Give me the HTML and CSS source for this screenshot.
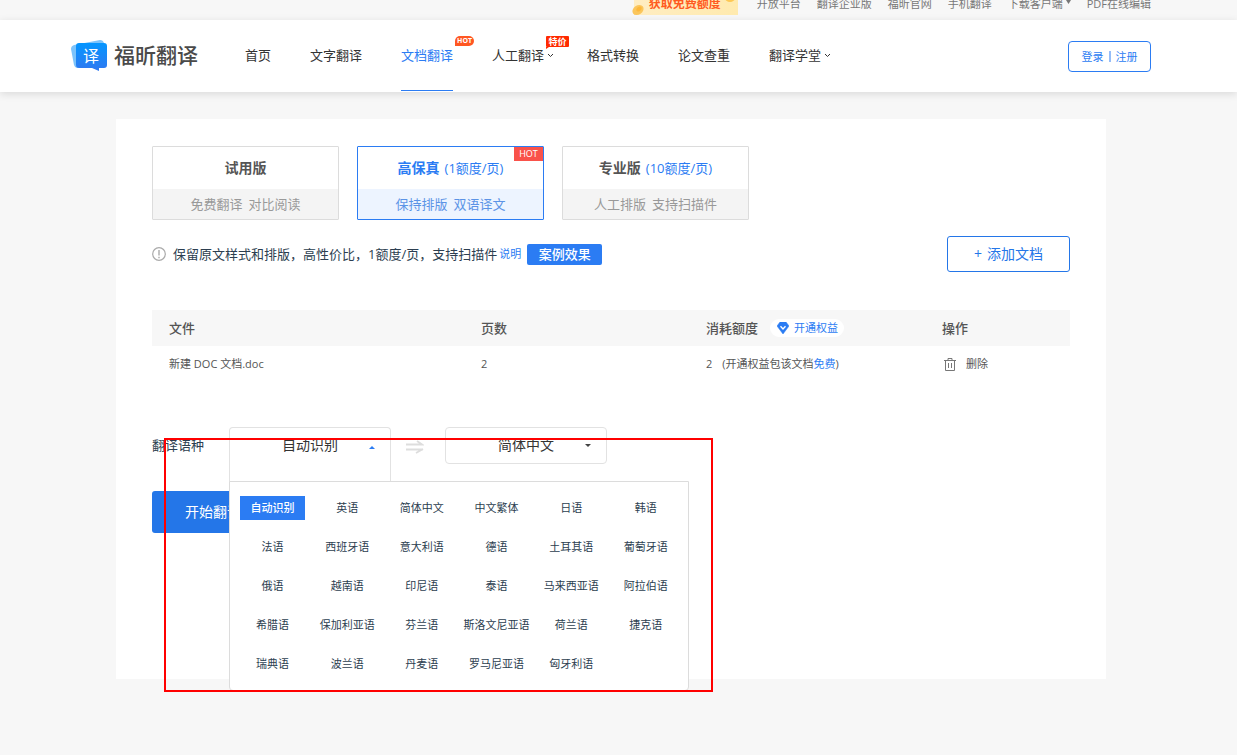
FILE: index.html
```html
<!DOCTYPE html>
<html lang="zh-CN">
<head>
<meta charset="utf-8">
<meta name="viewport" content="width=device-width, initial-scale=1">
<title>福昕翻译 - 文档翻译</title>
<link rel="stylesheet" href="styles.css">
</head>
<body>
<div class="topbar">
  <div class="wrap topbar-inner">
    <a class="promo" href="#">
      <svg class="promo-bg" viewBox="0 0 106 32" aria-hidden="true">
        <defs><linearGradient id="pg" x1="0" x2="1"><stop offset="0" stop-color="#ffedc2"/><stop offset="1" stop-color="#ffeaae"/></linearGradient></defs>
        <path d="M2 0H106V31H2Z" fill="url(#pg)"/>
        <ellipse cx="6" cy="26" rx="6" ry="4.500" transform="rotate(-35 6 26)" fill="#fbc65c"/>
        <ellipse cx="7" cy="25" rx="3" ry="2" transform="rotate(-35 7 25)" fill="#fdb83a"/>
        <ellipse cx="98" cy="14" rx="5" ry="4" fill="#fdc854"/>
      </svg>
      <span class="promo-text">获取免费额度</span>
    </a>
    <nav class="toplinks">
      <a href="#">开放平台</a>
      <a href="#">翻译企业版</a>
      <a href="#">福昕官网</a>
      <a href="#">手机翻译</a>
      <a href="#" class="with-caret">下载客户端<svg width="5" height="4" viewBox="0 0 5 4" aria-hidden="true"><path d="M0 0H5L2.500 4Z" fill="#777"/></svg></a>
      <a href="#">PDF在线编辑</a>
    </nav>
  </div>
</div>

<header class="header">
  <div class="wrap header-inner">
    <a class="logo" href="#">
      <span class="logo-mark">
        <svg width="37" height="32" viewBox="0 0 37 32" aria-hidden="true">
          <defs><linearGradient id="lg" x1="0" y1="0" x2="0" y2="1"><stop offset="0" stop-color="#0496ff"/><stop offset="1" stop-color="#3178f0"/></linearGradient></defs>
          <path d="M3 5L29 0Q32 0 33 3L34 20L6 28Q4 28 3 25L0 9Q0 6 3 5Z" fill="#7cc3fb"/>
          <path d="M8 3H33Q36 3 36 6V25Q36 28 33 28H28V31L21 28H8Q5 28 5 25V6Q5 3 8 3Z" fill="url(#lg)"/>
        </svg>
        <span class="logo-char">译</span>
      </span>
      <span class="logo-text">福昕翻译</span>
    </a>
    <nav class="nav">
      <a href="#">首页</a>
      <a href="#">文字翻译</a>
      <a href="#" class="active">文档翻译<span class="tag tag-hot">HOT</span></a>
      <a href="#" class="menu">人工翻译<svg width="7" height="5" viewBox="0 0 7 5" aria-hidden="true"><path d="M1 1L3.500 3.500L6 1" fill="none" stroke="#333"/></svg><span class="tag tag-sale">特价</span></a>
      <a href="#">格式转换</a>
      <a href="#">论文查重</a>
      <a href="#" class="menu">翻译学堂<svg width="7" height="5" viewBox="0 0 7 5" aria-hidden="true"><path d="M1 1L3.500 3.500L6 1" fill="none" stroke="#333"/></svg></a>
    </nav>
    <button class="login" type="button">登录<i></i>注册</button>
  </div>
</header>

<main class="card">
  <div class="plans">
    <button type="button" class="plan">
      <span class="plan-title"><b>试用版</b></span>
      <span class="plan-desc"><span>免费翻译</span><span>对比阅读</span></span>
    </button>
    <button type="button" class="plan selected">
      <span class="plan-title"><b>高保真</b><span class="price">(1额度/页)</span></span>
      <span class="plan-desc"><span>保持排版</span><span>双语译文</span></span>
      <span class="plan-hot">HOT</span>
    </button>
    <button type="button" class="plan">
      <span class="plan-title"><b>专业版</b><span class="price">(10额度/页)</span></span>
      <span class="plan-desc"><span>人工排版</span><span>支持扫描件</span></span>
    </button>
  </div>

  <div class="info">
    <svg width="14" height="16" viewBox="0 0 14 16" aria-hidden="true"><circle cx="7" cy="8" r="6.300" fill="none" stroke="#aaa" stroke-width="1.200"/><path d="M7 4V9.500M7 10.800V12.200" stroke="#aaa" stroke-width="1.400"/></svg>
    <span class="info-text">保留原文样式和排版，高性价比，1额度/页，支持扫描件</span>
    <a class="explain" href="#">说明</a>
    <button class="example" type="button">案例效果</button>
    <button class="add" type="button"><span>+</span>添加文档</button>
  </div>

  <table class="files">
    <colgroup><col class="c-file"><col class="c-pages"><col class="c-cost"><col class="c-act"></colgroup>
    <thead>
      <tr>
        <th>文件</th>
        <th>页数</th>
        <th><span class="cell">消耗额度<a class="vip" href="#"><svg width="12" height="12" viewBox="0 0 12 12" aria-hidden="true"><path d="M3 0H9L12 4L6 12L0 4Z" fill="#2b7cf3" stroke="#2b7cf3" stroke-linejoin="round" stroke-width=".5"/><path d="M3.500 4.200L6 7L8.500 4.200" fill="none" stroke="#fff" stroke-width="1.300"/></svg>开通权益</a></span></th>
        <th>操作</th>
      </tr>
    </thead>
    <tbody>
      <tr>
        <td>新建 DOC 文档.doc</td>
        <td>2</td>
        <td><span class="cell cost">2<span>(开通权益包该文档<a href="#">免费</a>)</span></span></td>
        <td><button class="delete" type="button"><svg width="12" height="13" viewBox="0 0 12 13" aria-hidden="true"><path d="M0 2.500H12M4 2V.5H8V2M1.500 2.500V12.500H10.500V2.500M4.500 5V10M7.500 5V10" fill="none" stroke="#777"/></svg>删除</button></td>
      </tr>
    </tbody>
  </table>

  <div class="languages">
    <label class="lang-label" for="from">翻译语种</label>
    <div class="picker open">
      <select id="from"><option>自动识别</option></select>
      <svg class="arrow" width="6" height="3" viewBox="0 0 6 3" aria-hidden="true"><path d="M0 3H6L3 0Z" fill="#2b7cf3"/></svg>
      <div class="panel">
        <button type="button" class="chosen">自动识别</button>
        <button type="button">英语</button>
        <button type="button">简体中文</button>
        <button type="button">中文繁体</button>
        <button type="button">日语</button>
        <button type="button">韩语</button>
        <button type="button">法语</button>
        <button type="button">西班牙语</button>
        <button type="button">意大利语</button>
        <button type="button">德语</button>
        <button type="button">土耳其语</button>
        <button type="button">葡萄牙语</button>
        <button type="button">俄语</button>
        <button type="button">越南语</button>
        <button type="button">印尼语</button>
        <button type="button">泰语</button>
        <button type="button">马来西亚语</button>
        <button type="button">阿拉伯语</button>
        <button type="button">希腊语</button>
        <button type="button">保加利亚语</button>
        <button type="button">芬兰语</button>
        <button type="button">斯洛文尼亚语</button>
        <button type="button">荷兰语</button>
        <button type="button">捷克语</button>
        <button type="button">瑞典语</button>
        <button type="button">波兰语</button>
        <button type="button">丹麦语</button>
        <button type="button">罗马尼亚语</button>
        <button type="button">匈牙利语</button>
      </div>
    </div>
    <svg class="swap" width="18" height="14" viewBox="0 0 18 14" aria-hidden="true"><path d="M0 4.500H16L11 1M0 9.500H17M17 9L10 13" fill="none" stroke="#ddd" stroke-width="1.800"/></svg>
    <div class="picker">
      <select id="to" aria-label="目标语种"><option>简体中文</option></select>
      <svg class="arrow" width="6" height="3" viewBox="0 0 6 3" aria-hidden="true"><path d="M0 0H6L3 3Z" fill="#444"/></svg>
    </div>
    <div class="marker"></div>
  </div>

  <button class="start" type="button">开始翻译</button>
</main>
</body>
</html>
```

FILE: styles.css
```css
* {
  box-sizing: border-box;
}

body {
  margin: 0;
  padding-right: 15px;
  min-height: 100vh;
  background: #f7f7f7;
  color: #333;
  font-family: "Open Sans", "Noto Sans CJK SC", sans-serif;
  font-size: 13px;
  line-height: 20px;
}

a {
  color: inherit;
  text-decoration: none;
}

button,
select {
  margin: 0;
  padding: 0;
  border: 0;
  background: none;
  color: inherit;
  font: inherit;
  white-space: nowrap;
  cursor: pointer;
}

.wrap {
  max-width: 1080px;
  margin: 0 auto;
}

/* top bar */
.topbar {
  height: 20px;
  overflow: hidden;
}

.topbar-inner {
  display: flex;
  justify-content: flex-end;
  align-items: flex-end;
  gap: 19px;
  height: 20px;
}

.promo {
  position: relative;
  display: flex;
  justify-content: center;
  align-items: flex-end;
  width: 106px;
  height: 32px;
  padding-bottom: 4px;
  margin-bottom: 4px;
}

.promo-bg {
  position: absolute;
  inset: 0;
}

.promo-text {
  position: relative;
  color: #ff5a1f;
  font-size: 12px;
  font-weight: 700;
  line-height: 16px;
}

.toplinks {
  display: flex;
  gap: 16px;
  padding-bottom: 8px;
  color: #777;
  font-size: 11px;
  line-height: 16px;
}

.with-caret {
  display: flex;
  gap: 3px;
}

.with-caret svg {
  margin-top: 4px;
}

/* header */
.header {
  margin-right: -15px;
  padding-right: 15px;
  background: #fff;
  box-shadow: 0 2px 8px rgba(0, 0, 0, .12);
}

.header-inner {
  display: flex;
  height: 72px;
}

.logo {
  display: flex;
  align-items: center;
  gap: 6px;
}

.logo-mark {
  display: grid;
  place-items: center;
}

.logo-mark svg,
.logo-char {
  grid-area: 1 / 1;
}

.logo-char {
  padding-left: 3px;
  color: #fff;
  font-size: 16px;
}

.logo-text {
  padding-bottom: 3px;
  color: #4a4a4a;
  font-size: 21px;
  font-weight: 500;
  line-height: 32px;
}

.nav {
  display: flex;
  gap: 39px;
  margin-left: 47px;
  line-height: 70px;
}

.nav a {
  position: relative;
  height: 71px;
  white-space: nowrap;
}

.nav .active {
  border-bottom: 1px solid #2b7cf3;
  color: #2b7cf3;
}

.nav .menu {
  display: flex;
  align-items: center;
  gap: 3px;
  height: 70px;
}

.menu svg {
  margin-right: -6px;
}

.tag {
  position: absolute;
  color: #fff;
  font-weight: 700;
  text-align: center;
}

.tag-hot {
  top: 16px;
  left: 54px;
  width: 19px;
  border-radius: 5px 5px 5px 0;
  background: #ff5722;
  font-size: 7px;
  line-height: 10px;
}

.tag-sale {
  top: 16px;
  left: 54px;
  width: 23px;
  border-radius: 1px;
  background: #ff2a00;
  font-size: 9px;
  line-height: 11px;
}

.tag-sale::after {
  content: "";
  position: absolute;
  top: 11px;
  left: 0;
  border-top: 2px solid #ff2a00;
  border-right: 3px solid transparent;
}

.login {
  display: flex;
  align-items: center;
  justify-content: center;
  gap: 5px;
  width: 83px;
  height: 31px;
  margin: 21px 0 0 auto;
  border: 1px solid #2b7cf3;
  border-radius: 4px;
  color: #2b7cf3;
  font-size: 11px;
}

.login i {
  width: 2px;
  height: 11px;
  background: #95bdf9;
}

/* card */
.card {
  max-width: 990px;
  min-height: 560px;
  margin: 27px auto 0;
  padding: 27px 36px;
  background: #fff;
}

.plans {
  display: flex;
  gap: 18px;
}

.plan {
  position: relative;
  display: flex;
  flex-direction: column;
  width: 187px;
  height: 74px;
  border: 1px solid #dcdcdc;
  border-radius: 1px;
}

.plan-title,
.plan-desc {
  display: flex;
  align-items: center;
  justify-content: center;
  width: 100%;
}

.plan-title {
  gap: 5px;
  height: 42px;
  color: #555;
  font-size: 14px;
}

.price {
  color: #2b7cf3;
  font-size: 13px;
}

.plan-desc {
  flex: 1;
  gap: 6px;
  padding-bottom: 1px;
  background: #f4f4f4;
  color: #999;
}

.selected {
  border-color: #2b7cf3;
}

.selected .plan-title {
  color: #2b7cf3;
}

.selected .plan-desc {
  background: #edf4ff;
  color: #5b93e6;
}

.plan-hot {
  position: absolute;
  top: 0;
  right: 0;
  width: 29px;
  background: #f9524a;
  color: #fff;
  font-size: 9px;
  line-height: 14px;
}

.info {
  display: flex;
  align-items: center;
  margin-top: 16px;
}

.info-text {
  margin-left: 7px;
  color: #2c3e50;
}

.explain {
  margin-left: 2px;
  color: #2b7cf3;
  font-size: 11px;
}

.example {
  width: 75px;
  height: 21px;
  margin-left: 6px;
  border-radius: 2px;
  background: #2b7cf3;
  color: #fff;
  font-weight: 500;
  line-height: 20px;
}

.add {
  display: flex;
  align-items: center;
  justify-content: center;
  gap: 5px;
  width: 123px;
  height: 36px;
  margin-left: auto;
  border: 1px solid #2476e8;
  border-radius: 3px;
  color: #2476e8;
  font-size: 14px;
}

/* file table */
.files {
  width: 100%;
  margin-top: 38px;
  border-collapse: collapse;
  table-layout: fixed;
  color: #555;
  font-size: 11px;
}

.c-file { width: 34%; }
.c-pages { width: 24.5%; }
.c-cost { width: 25.7%; }

.files th,
.files td {
  height: 36px;
  padding: 0 0 0 17px;
  text-align: left;
}

.files th {
  background: #f7f7f7;
  font-size: 13px;
  font-weight: 500;
}

.cell {
  display: flex;
  align-items: center;
}

.vip {
  display: flex;
  align-items: center;
  gap: 5px;
  margin-left: 12px;
  padding: 0 6px 0 7px;
  border-radius: 9px;
  background: #fff;
  color: #2b7cf3;
  font-size: 11px;
  font-weight: 400;
  line-height: 18px;
}

.cost {
  gap: 10px;
}

.cost a {
  color: #2b7cf3;
}

.delete {
  display: flex;
  align-items: center;
  gap: 10px;
  padding-left: 2px;
}

/* language pickers */
.languages {
  position: relative;
  display: flex;
  align-items: flex-start;
  margin-top: 45px;
}

.lang-label {
  width: 77px;
  color: #2c3e50;
  line-height: 36px;
}

.picker {
  position: relative;
  width: 162px;
  border: 1px solid #e2e2e2;
  border-radius: 4px;
}

.picker select {
  display: block;
  width: 100%;
  height: 35px;
  padding-bottom: 2px;
  appearance: none;
  font-size: 14px;
  text-align: center;
  text-align-last: center;
}

.arrow {
  position: absolute;
  top: 16px;
  right: 15px;
  pointer-events: none;
}

.open {
  z-index: 1;
  height: 55px;
  margin-bottom: -18px;
  border-bottom: 0;
  border-radius: 4px 4px 0 0;
  background: #fff;
}

.open .arrow {
  top: 18px;
}

.panel {
  position: absolute;
  top: 53px;
  left: -1px;
  display: grid;
  grid-template-columns: repeat(6, 1fr);
  row-gap: 15px;
  width: 460px;
  padding: 14px 0 14px 10px;
  border: 1px solid #dcdcdc;
  border-radius: 0 0 4px 4px;
  background: #fff;
}

.panel button {
  display: flex;
  align-items: center;
  justify-content: center;
  width: 65px;
  height: 24px;
  color: #2c3e50;
  font-size: 11px;
}

.panel .chosen {
  background: #2b7cf3;
  color: #fff;
  font-weight: 500;
}

.swap {
  margin: 13px 21px 0 15px;
}

/* highlight frame drawn above the open picker */
.marker {
  position: absolute;
  z-index: 2;
  top: 11px;
  left: 12px;
  width: 549px;
  height: 254px;
  border: 2px solid #f00;
  pointer-events: none;
}

.start {
  width: 122px;
  height: 42px;
  margin-top: 27px;
  border-radius: 3px;
  background: #2476e8;
  color: #fff;
  font-size: 14px;
}
```
